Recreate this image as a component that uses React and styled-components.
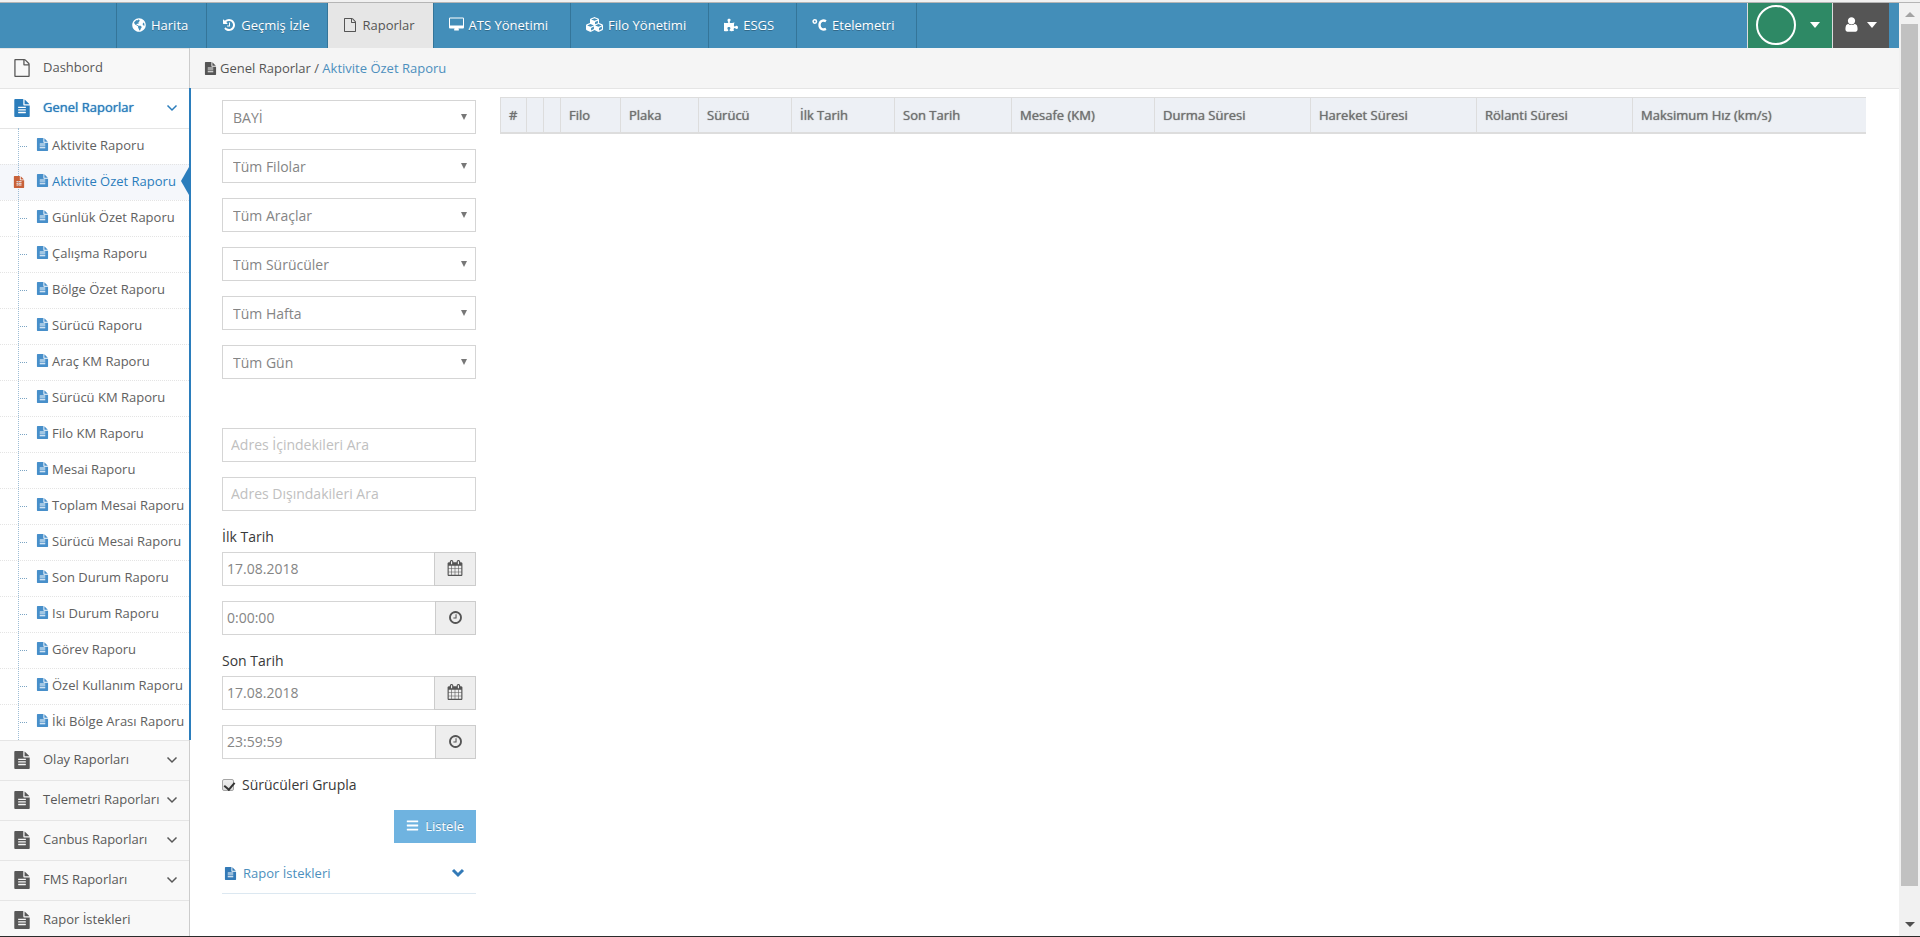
import React, { useState } from 'react'
import styled, { createGlobalStyle, css } from 'styled-components'
import { FaGlobeAmericas, FaCubes, FaPuzzlePiece, FaBars } from 'react-icons/fa'

const GlobalStyle = createGlobalStyle`
  * {
    box-sizing: border-box;
  }

  body {
    margin: 0;
    background: #fff;
    color: #393939;
    font-family: "Open Sans", "Noto Sans", sans-serif;
    font-size: 13px;
    line-height: 20px;
  }

  a {
    color: inherit;
    text-decoration: none;
  }

  ul {
    list-style: none;
    margin: 0;
    padding: 0;
  }

  button, input, select {
    font: inherit;
    border-radius: 0;
    margin: 0;
  }

  svg {
    display: block;
    flex: none;
  }
`;

/* Icons */
const paths = {
  fileText: 'M1596 476q14 14 28 36h-472v-472q22 14 36 28zm-476 164h544v1056q0 40-28 68t-68 28h-1344q-40 0-68-28t-28-68v-1600q0-40 28-68t68-28h800v544q0 40 28 68t68 28zm160 736v-64q0-14-9-23t-23-9h-704q-14 0-23 9t-9 23v64q0 14 9 23t23 9h704q14 0 23-9t9-23zm0-256v-64q0-14-9-23t-23-9h-704q-14 0-23 9t-9 23v64q0 14 9 23t23 9h704q14 0 23-9t9-23zm0-256v-64q0-14-9-23t-23-9h-704q-14 0-23 9t-9 23v64q0 14 9 23t23 9h704q14 0 23-9t9-23z',
  file: 'M1596 380q28 28 48 76t20 88v1152q0 40-28 68t-68 28h-1344q-40 0-68-28t-28-68v-1600q0-40 28-68t68-28h896q40 0 88 20t76 48zm-444-244v376h376q-10-29-22-41l-313-313q-12-12-41-22zm384 1528v-1024h-416q-40 0-68-28t-28-68v-416h-768v1536h1280z',
  history: 'M1664 896q0 156-61 298t-164 245-245 164-298 61q-172 0-327-72.5t-264-204.5q-7-10-6.5-22.5t8.5-20.5l137-138q10-9 25-9 16 2 23 12 73 95 179 147t225 52q104 0 198.5-40.5t163.5-109.5 109.5-163.5 40.5-198.5-40.5-198.5-109.5-163.5-163.5-109.5-198.5-40.5q-98 0-188 35.5t-160 101.5l137 138q31 30 14 69-17 40-59 40h-448q-26 0-45-19t-19-45v-448q0-42 40-59 39-17 69 14l130 129q107-101 244.5-156.5t284.5-55.5q156 0 298 61t245 164 164 245 61 298zm-640-288v448q0 14-9 23t-23 9h-320q-14 0-23-9t-9-23v-64q0-14 9-23t23-9h224v-352q0-14 9-23t23-9h64q14 0 23 9t9 23z',
  desktop: 'M1728 992v-832q0-13-9.5-22.5t-22.5-9.5h-1600q-13 0-22.5 9.5t-9.5 22.5v832q0 13 9.5 22.5t22.5 9.5h1600q13 0 22.5-9.5t9.5-22.5zm128-832v1088q0 66-47 113t-113 47h-544q0 37 16 77.5t32 71 16 43.5q0 26-19 45t-45 19h-512q-26 0-45-19t-19-45q0-14 16-44t32-70 16-78h-544q-66 0-113-47t-47-113v-1088q0-66 47-113t113-47h1600q66 0 113 47t47 113z',
  user: 'M1536 1399q0 109-62.5 187t-150.5 78h-854q-88 0-150.5-78t-62.5-187q0-85 8.5-160.5t31.5-152 58.5-131 94-89 134.5-34.5q131 128 313 128t313-128q76 0 134.5 34.5t94 89 58.5 131 31.5 152 8.5 160.5zm-256-887q0 159-112.5 271.5t-271.5 112.5-271.5-112.5-112.5-271.5 112.5-271.5 271.5-112.5 271.5 112.5 112.5 271.5z',
  calendar: 'M192 1664h288v-288h-288v288zm352 0h320v-288h-320v288zm-352-352h288v-320h-288v320zm352 0h320v-320h-320v320zm-352-384h288v-288h-288v288zm736 736h320v-288h-320v288zm-384-736h320v-288h-320v288zm768 736h288v-288h-288v288zm-384-352h320v-320h-320v320zm-352-864v-288q0-13-9.5-22.5t-22.5-9.5h-64q-13 0-22.5 9.5t-9.5 22.5v288q0 13 9.5 22.5t22.5 9.5h64q13 0 22.5-9.5t9.5-22.5zm736 864h288v-320h-288v320zm-384-384h320v-288h-320v288zm384 0h288v-288h-288v288zm32-480v-288q0-13-9.5-22.5t-22.5-9.5h-64q-13 0-22.5 9.5t-9.5 22.5v288q0 13 9.5 22.5t22.5 9.5h64q13 0 22.5-9.5t9.5-22.5zm384-64v1280q0 52-38 90t-90 38h-1408q-52 0-90-38t-38-90v-1280q0-52 38-90t90-38h128v-96q0-66 47-113t113-47h64q66 0 113 47t47 113v96h384v-96q0-66 47-113t113-47h64q66 0 113 47t47 113v96h128q52 0 90 38t38 90z',
  clock: 'M1024 544v448q0 14-9 23t-23 9h-320q-14 0-23-9t-9-23v-64q0-14 9-23t23-9h224v-352q0-14 9-23t23-9h64q14 0 23 9t9 23zm416 352q0-148-73-273t-198-198-273-73-273 73-198 198-73 273 73 273 198 198 273 73 273-73 198-198 73-273zm224 0q0 209-103 385.5t-279.5 279.5-385.5 103-385.5-103-279.5-279.5-103-385.5 103-385.5 279.5-279.5 385.5-103 385.5 103 279.5 279.5 103 385.5z',
}

function Icon({ name, size = 14, box = '0 0 1792 1792' }) {
  return (
    <svg width={size} height={size} viewBox={box} fill="currentColor" aria-hidden="true">
      <path d={paths[name]} />
    </svg>
  )
}

function Angle() {
  return (
    <svg width="12" height="8" viewBox="0 0 12 8" fill="none" stroke="currentColor" strokeWidth="1.5" aria-hidden="true">
      <path d="M1.5 1.5L6 6L10.5 1.5" />
    </svg>
  )
}

function Chevron() {
  return (
    <svg width="14" height="10" viewBox="0 0 14 10" fill="none" stroke="currentColor" strokeWidth="3" aria-hidden="true">
      <path d="M2 2L7 7L12 2" />
    </svg>
  )
}

function Celsius() {
  return (
    <svg width="15" height="14" viewBox="0 0 15 14" fill="none" stroke="currentColor" aria-hidden="true">
      <circle cx="2.8" cy="3.5" r="1.7" strokeWidth="1.5" />
      <path d="M14 3.3C11 1.4 7.500 3 7.500 7S11 12.400 14 10.900" strokeWidth="2.300" />
    </svg>
  )
}

/* Page frame */
const Shell = styled.div`
  display: flex;
  flex-direction: column;
  height: 100vh;
  border-bottom: 1px solid #2b2b2b;
`;

const TopEdge = styled.div`
  flex: none;
  height: 3px;
  background: #f1f1f1;
  border-bottom: 1px solid #b5b5b5;
`;

const Window = styled.div`
  display: flex;
  flex: 1;
  min-height: 0;
`;

const Page = styled.div`
  flex: 1;
  min-width: 0;
  overflow-y: auto;
  scrollbar-width: none;
`;

const ScrollTrack = styled.div`
  display: flex;
  flex-direction: column;
  align-items: center;
  width: 21px;
  padding: 9px 0;
  background: #f1f1f1;
`;

const ScrollArrow = styled.span`
  border: 5px solid transparent;
  ${p => p.$up ? css`
    border-top: 0;
    border-bottom-color: #a3a3a3;
  ` : css`
    border-bottom: 0;
    border-top-color: #505050;
  `}
`;

const ScrollThumb = styled.span`
  flex: 1;
  width: 17px;
  margin: 7px 0 36px;
  background: #c1c1c1;
`;

/* Top bar */
const Navbar = styled.header`
  display: flex;
  height: 45px;
  padding-right: 10px;
  background: #438eb9;
`;

const NavList = styled.ul`
  display: flex;
  flex: 1;
  padding-left: 116px;

  li:last-child {
    border-right: 1px solid #347599;
  }
`;

const NavLink = styled.a`
  display: flex;
  align-items: center;
  gap: 5px;
  height: 45px;
  padding: 0 ${p => p.$wide ? 22 : 18}px 2px 15px;
  border-left: 1px solid #347599;
  color: #fff;
  text-shadow: 0 1px 0 rgba(0, 0, 0, 0.25);
  white-space: nowrap;

  ${p => p.$active && css`
    background: #e6e6e6;
    color: #555;
    text-shadow: none;
  `}
`;

const NavButton = styled.button`
  display: flex;
  align-items: center;
  border: 0;
  border-left: 1px solid #ddd;
  background: ${p => p.$green ? '#2e8965' : '#555'};
  color: #fff;
  padding: ${p => p.$green ? '0 12px 2px 8px' : '0 12px 2px 10px'};
  gap: ${p => p.$green ? 14 : 7}px;
  cursor: pointer;
`;

const Avatar = styled.span`
  width: 40px;
  height: 40px;
  border: 2px solid #fff;
  border-radius: 50%;
`;

const Caret = styled.span`
  border: 5px solid transparent;
  border-top: 6px solid #fff;
  border-bottom: 0;
`;

const Body = styled.div`
  display: flex;
`;

/* Side menu */
const Sidebar = styled.nav`
  flex: none;
  width: 190px;
  border-right: 1px solid #ccc;
  background: #f2f2f2;
`;

const Section = styled.li`
  position: relative;

  /* blue bar beside the open section */
  ${p => p.$open && css`
    &::after {
      content: "";
      position: absolute;
      top: 0;
      bottom: 0;
      right: -2px;
      width: 2px;
      background: #2b7dbc;
    }
  `}
`;

/* synthetic bold that keeps the width of the regular face */
const heavy = css`
  font-weight: 400;
  text-shadow: 0 0 1px currentColor;
`;

const SectionLink = styled.a`
  display: flex;
  align-items: center;
  height: 40px;
  padding: 0 11px 2px 13px;
  border-top: 1px solid #e5e5e5;
  background: ${p => p.$open ? '#fff' : '#f8f8f8'};
  color: ${p => p.$open ? '#2b7dbc' : '#585858'};
  white-space: nowrap;
  ${p => p.$open && heavy}

  span {
    flex: 1;
    padding: 0 0 2px 12px;
  }
`;

const SubMenu = styled.ul`
  position: relative;
  background: #fff;

  &::before {
    content: "";
    position: absolute;
    z-index: 1;
    top: 0;
    bottom: 0;
    left: 18px;
    border-left: 1px dotted #9dbdd6;
  }
`;

const SubLink = styled.a`
  position: relative;
  display: flex;
  align-items: center;
  gap: 3px;
  height: 36px;
  padding: 0 0 4px 36px;
  border-top: 1px dotted #e4e4e4;
  color: ${p => p.$active ? '#2b7dbc' : '#616161'};
  background: ${p => p.$active ? '#f5f7fb' : '#fff'};
  white-space: nowrap;

  svg {
    color: #478fca;
  }

  &::before {
    content: "";
    position: absolute;
    top: 17px;
    left: 20px;
    width: 7px;
    border-top: 1px dotted #7ba5c4;
    ${p => p.$active && 'display: none;'}
  }

  ${p => p.$active && css`
    &::after {
      content: "";
      position: absolute;
      top: 2px;
      right: 0;
      border: 14px solid transparent;
      border-left: 0;
      border-right: 8px solid #2b7dbc;
    }
  `}

  li:first-child > & {
    border-top: 1px solid #e5e5e5;
  }
`;

const Marker = styled.span`
  position: absolute;
  z-index: 2;
  top: 11px;
  left: 13px;

  svg {
    color: #c86139;
  }
`;

/* Content */
const Main = styled.main`
  flex: 1;
  min-width: 0;
`;

const Breadcrumb = styled.div`
  display: flex;
  align-items: center;
  gap: 3px;
  height: 41px;
  padding-left: 14px;
  border-bottom: 1px solid #e5e5e5;
  background: #f5f5f5;
  color: #555;

  a {
    color: #4c8fbd;
  }
`;

const Content = styled.div`
  display: flex;
  align-items: flex-start;
  gap: 24px;
  padding: 8px 33px 40px 32px;
`;

const Filters = styled.form`
  display: flex;
  flex-direction: column;
  gap: 15px;
  flex: none;
  width: 254px;
  padding-top: 3px;
  font-size: 14px;
`;

const SelectBox = styled.div`
  position: relative;

  &::after {
    content: "";
    position: absolute;
    top: 14px;
    right: 9px;
    border: 3px solid transparent;
    border-top: 6px solid #777;
    border-bottom: 0;
    pointer-events: none;
  }

  select {
    appearance: none;
    display: block;
    width: 100%;
    height: 34px;
    padding: 2px 24px 0 10px;
    border: 1px solid #d5d5d5;
    background: #fff;
    color: #858585;
  }
`;

const TextInput = styled.input`
  display: block;
  width: 100%;
  min-width: 0;
  height: 34px;
  padding: 0 ${p => p.$tight ? 4 : 8}px 2px;
  border: 1px solid #d5d5d5;
  background: #fff;
  color: #858585;

  &::placeholder {
    color: #c0c0c0;
    opacity: 1;
  }
`;

const AddressFields = styled.div`
  display: flex;
  flex-direction: column;
  gap: 15px;
  padding-top: 34px;
`;

const Field = styled.div`
  display: flex;
  flex-direction: column;
  gap: 5px;

  label {
    line-height: 21px;
  }
`;

const InputGroup = styled.div`
  display: flex;

  button {
    display: flex;
    align-items: center;
    padding: 0 12px 2px;
    border: 1px solid #ccc;
    margin-left: -1px;
    background: #eee;
    color: #555;
  }
`;

const CheckLabel = styled.label`
  display: flex;
  align-items: center;
  gap: 8px;
  height: 21px;

  input {
    appearance: none;
    position: relative;
    width: 12px;
    height: 12px;
    border: 1px solid #a5a5a5;
    border-radius: 2px;
    background: linear-gradient(#eee, #ddd);
  }

  input:checked::after {
    content: "";
    position: absolute;
    top: 0;
    left: 3px;
    width: 5px;
    height: 8px;
    border: solid #333;
    border-width: 0 2px 2px 0;
    transform: rotate(40deg);
  }
`;

const ListButton = styled.button`
  display: flex;
  align-items: center;
  align-self: flex-end;
  gap: 6px;
  height: 33px;
  padding: 0 12px 2px;
  border: 0;
  background: #6fb3e0;
  color: #fff;
  font-size: 13px;
  text-shadow: 0 -1px 0 rgba(0, 0, 0, 0.25);
`;

const RequestsToggle = styled.button`
  display: flex;
  align-items: center;
  height: 36px;
  padding: 0 11px 5px 2px;
  border: 0;
  border-bottom: 1px solid #dce8f1;
  background: none;
  color: #4c8fbd;
  font-size: 13px;
  text-align: left;

  svg {
    color: #337ab7;
  }

  span {
    flex: 1;
    padding-left: 6px;
  }
`;

const ReportTable = styled.table`
  flex: 1;
  min-width: 0;
  table-layout: fixed;
  border-collapse: separate;
  border-spacing: 0;
  border-left: 1px solid #ddd;

  th {
    height: 37px;
    padding: 0 8px;
    border-top: 1px solid #ddd;
    border-bottom: 2px solid #ddd;
    border-right: 1px solid #ddd;
    background: #edf0f5;
    color: #707070;
    text-align: left;
    white-space: nowrap;
    ${heavy}
  }

  th:last-child {
    border-right: 0;
  }
`;

const navItems = [
  { text: 'Harita', icon: <FaGlobeAmericas size={14} /> },
  { text: 'Geçmiş İzle', icon: <Icon name="history" /> },
  { text: 'Raporlar', icon: <Icon name="file" />, active: true },
  { text: 'ATS Yönetimi', icon: <Icon name="desktop" size={15} box="-64 0 1920 1792" />, wide: true },
  { text: 'Filo Yönetimi', icon: <FaCubes size={17} />, wide: true },
  { text: 'ESGS', icon: <FaPuzzlePiece size={14} />, wide: true },
  { text: 'Etelemetri', icon: <Celsius />, wide: true },
]

const reports = [
  'Aktivite Raporu',
  'Aktivite Özet Raporu',
  'Günlük Özet Raporu',
  'Çalışma Raporu',
  'Bölge Özet Raporu',
  'Sürücü Raporu',
  'Araç KM Raporu',
  'Sürücü KM Raporu',
  'Filo KM Raporu',
  'Mesai Raporu',
  'Toplam Mesai Raporu',
  'Sürücü Mesai Raporu',
  'Son Durum Raporu',
  'Isı Durum Raporu',
  'Görev Raporu',
  'Özel Kullanım Raporu',
  'İki Bölge Arası Raporu',
]

const sections = [
  { text: 'Dashbord', icon: 'file' },
  { text: 'Genel Raporlar', icon: 'fileText', arrow: true, items: reports },
  { text: 'Olay Raporları', icon: 'fileText', arrow: true },
  { text: 'Telemetri Raporları', icon: 'fileText', arrow: true },
  { text: 'Canbus Raporları', icon: 'fileText', arrow: true },
  { text: 'FMS Raporları', icon: 'fileText', arrow: true },
  { text: 'Rapor İstekleri', icon: 'fileText' },
]

const selects = [
  ['Bayi', 'BAYİ'],
  ['Filo', 'Tüm Filolar'],
  ['Araç', 'Tüm Araçlar'],
  ['Sürücü', 'Tüm Sürücüler'],
  ['Hafta', 'Tüm Hafta'],
  ['Gün', 'Tüm Gün'],
]

// the last column takes the remaining width
const columns = [
  ['#', 26],
  ['', 17],
  ['', 17],
  ['Filo', 60],
  ['Plaka', 78],
  ['Sürücü', 93],
  ['İlk Tarih', 103],
  ['Son Tarih', 117],
  ['Mesafe (KM)', 143],
  ['Durma Süresi', 156],
  ['Hareket Süresi', 166],
  ['Rölanti Süresi', 156],
  ['Maksimum Hız (km/s)'],
]

function DateField({ id, label, date, time }) {
  return (
    <>
      <Field>
        <label htmlFor={id}>{label}</label>
        <InputGroup>
          <TextInput $tight id={id} defaultValue={date} />
          <button type="button" aria-label={label + ' takvim'}><Icon name="calendar" size={16} /></button>
        </InputGroup>
      </Field>
      <InputGroup>
        <TextInput $tight aria-label={label + ' saat'} defaultValue={time} />
        <button type="button" aria-label={label + ' saat seç'}><Icon name="clock" size={15} /></button>
      </InputGroup>
    </>
  )
}

function SideMenu() {
  const [active, setActive] = useState('Aktivite Özet Raporu')

  return (
    <Sidebar>
      <ul>
        {sections.map(s => (
          <Section key={s.text} $open={!!s.items}>
            <SectionLink href="#" $open={!!s.items}>
              <Icon name={s.icon} size={18} />
              <span>{s.text}</span>
              {s.arrow && <Angle />}
            </SectionLink>
            {s.items && (
              <SubMenu>
                {s.items.map(item => (
                  <li key={item}>
                    <SubLink href="#" $active={item === active} onClick={() => setActive(item)}>
                      {item === active && <Marker><Icon name="fileText" size={12} /></Marker>}
                      <Icon name="fileText" size={13} />
                      {item}
                    </SubLink>
                  </li>
                ))}
              </SubMenu>
            )}
          </Section>
        ))}
      </ul>
    </Sidebar>
  )
}

function FilterForm() {
  return (
    <Filters onSubmit={e => e.preventDefault()}>
      {selects.map(([name, value]) => (
        <SelectBox key={name}>
          <select aria-label={name}>
            <option>{value}</option>
          </select>
        </SelectBox>
      ))}
      <AddressFields>
        <TextInput placeholder="Adres İçindekileri Ara" aria-label="Adres İçindekileri Ara" />
        <TextInput placeholder="Adres Dışındakileri Ara" aria-label="Adres Dışındakileri Ara" />
      </AddressFields>
      <DateField id="ilk" label="İlk Tarih" date="17.08.2018" time="0:00:00" />
      <DateField id="son" label="Son Tarih" date="17.08.2018" time="23:59:59" />
      <CheckLabel>
        <input type="checkbox" defaultChecked />
        Sürücüleri Grupla
      </CheckLabel>
      <ListButton type="submit"><FaBars size={13} />Listele</ListButton>
      <RequestsToggle type="button">
        <Icon name="fileText" size={13} />
        <span>Rapor İstekleri</span>
        <Chevron />
      </RequestsToggle>
    </Filters>
  )
}

export default function App() {
  return (
    <>
      <GlobalStyle />
      <Shell>
        <TopEdge />
        <Window>
          <Page>
            <Navbar>
              <NavList>
                {navItems.map(n => (
                  <li key={n.text}>
                    <NavLink href="#" $active={n.active} $wide={n.wide}>{n.icon}{n.text}</NavLink>
                  </li>
                ))}
              </NavList>
              <NavButton $green aria-label="Hesap"><Avatar /><Caret /></NavButton>
              <NavButton aria-label="Kullanıcı"><Icon name="user" size={17} /><Caret /></NavButton>
            </Navbar>
            <Body>
              <SideMenu />
              <Main>
                <Breadcrumb>
                  <Icon name="fileText" size={13} />
                  <span>Genel Raporlar / <a href="#">Aktivite Özet Raporu</a></span>
                </Breadcrumb>
                <Content>
                  <FilterForm />
                  <ReportTable>
                    <colgroup>
                      {columns.map(([, width], i) => <col key={i} width={width} />)}
                    </colgroup>
                    <thead>
                      <tr>
                        {columns.map(([text], i) => <th key={i}>{text}</th>)}
                      </tr>
                    </thead>
                  </ReportTable>
                </Content>
              </Main>
            </Body>
          </Page>
          <ScrollTrack aria-hidden="true">
            <ScrollArrow $up />
            <ScrollThumb />
            <ScrollArrow />
          </ScrollTrack>
        </Window>
      </Shell>
    </>
  )
}
